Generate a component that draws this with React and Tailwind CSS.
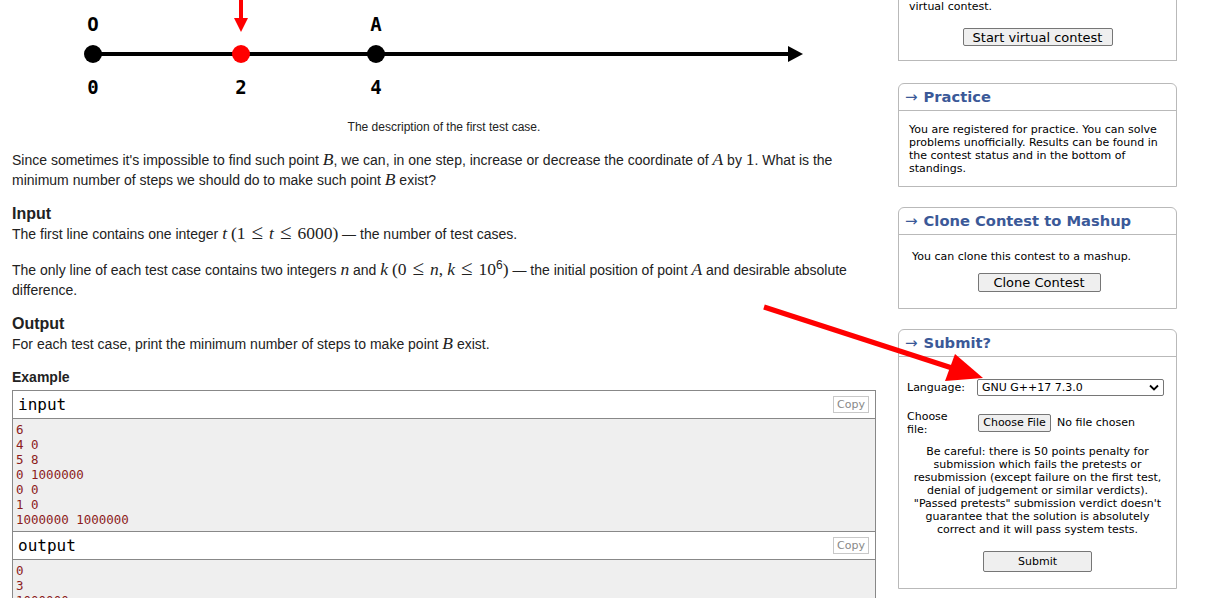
import React from 'react';

const sans = "font-['Liberation_Sans',Arial,sans-serif]";
const verdana = "font-['DejaVu_Sans',Verdana,sans-serif]";
const mono = "font-['DejaVu_Sans_Mono',monospace]";
const mathCls = "font-['Liberation_Serif',serif] text-[17.5px] leading-[0px]";

function M({ children, i = true }) {
  return <span className={`${mathCls} ${i ? 'italic' : ''}`}>{children}</span>;
}

// relation sign with the thick spacing tex puts around it
function Rel({ children }) {
  return <span className="font-['Liberation_Serif',serif] text-[21px] leading-[0px] mx-[6px]">{children}</span>;
}

/**
 * Number line picture of the first test case
 */
function Diagram() {
  return (
    <svg width="864" height="120" viewBox="0 0 864 120" className="block">
      <line x1="81" y1="54" x2="778" y2="54" stroke="#000" strokeWidth="4" />
      <polygon points="776,46 791,54 776,62" fill="#000" />
      <circle cx="81" cy="54" r="9" fill="#000" />
      <circle cx="229" cy="54" r="9" fill="#ff0000" />
      <circle cx="364" cy="54" r="9" fill="#000" />
      <line x1="229" y1="0" x2="229" y2="19" stroke="#ff0000" strokeWidth="4" />
      <polygon points="222,18 236,18 229,32" fill="#ff0000" />
      <g fontFamily="'DejaVu Sans Mono', monospace" fontWeight="bold" fontSize="19" textAnchor="middle">
        <text x="81" y="31">O</text>
        <text x="364" y="31">A</text>
        <text x="81" y="94">0</text>
        <text x="229" y="94">2</text>
        <text x="364" y="94">4</text>
      </g>
    </svg>
  );
}

function SampleBlock({ title, lines, last }) {
  return (
    <div className={last ? '' : 'border-b border-[#888]'}>
      <div className="h-[28px] border-b border-[#888] bg-white flex items-center justify-between pl-[5px] pr-[6px]">
        <span className={`${mono} text-[16px] text-black`}>{title}</span>
        <span className={`${verdana} text-[11px] leading-[15px] text-[#888] border border-[#c8c8c8] px-[3px]`}>Copy</span>
      </div>
      <div className={`${mono} bg-[#efefef] text-[12.5px] leading-[15px] text-[#8c1c1c] pl-[3px] pt-[3px] pb-[4px]`}>
        {lines.map((l, i) => (
          <div key={i} className="whitespace-pre">{l}</div>
        ))}
      </div>
    </div>
  );
}

function RoundBox({ title, children, className = '' }) {
  return (
    <div className={`border border-[#b9b9b9] rounded-t-[6px] ${className}`}>
      <div className="h-[27px] border-b border-[#b9b9b9] flex items-center pl-[6px] text-[#3b5998]">
        <span className={`${verdana} text-[15px] mr-[6px] leading-none`}>→</span>
        <span className={`${verdana} font-bold text-[14.7px] leading-none`}>{title}</span>
      </div>
      {children}
    </div>
  );
}

const btn = `${verdana} bg-[#efefef] border border-[#767676] rounded-[2px] text-black flex items-center justify-center`;

export default function App() {
  return (
    <div className="relative w-[1208px] h-[598px] overflow-hidden bg-white">
      <div className="flex items-start">
        {/* Problem statement */}
        <div className={`${sans} ml-[12px] w-[864px] text-[#222] text-[14px] leading-[20px]`}>
          <Diagram />
          <div className="text-center text-[12px] leading-[14px]">The description of the first test case.</div>

          <p className="mt-[16px]">
            Since sometimes it's impossible to find such point <M>B</M>, we can, in one step, increase or decrease the
            coordinate of <M>A</M> by <M i={false}>1</M>. What is the minimum number of steps we should do to make such
            point <M>B</M> exist?
          </p>

          <div className="mt-[14px] font-bold text-[16px]">Input</div>
          <p>
            The first line contains one integer <M>t</M>{' '}
            <M i={false}>(1</M><Rel>≤</Rel><M>t</M><Rel>≤</Rel><M i={false}>6000)</M> — the number of test cases.
          </p>
          <p className="mt-[16px]">
            The only line of each test case contains two integers <M>n</M> and <M>k</M>{' '}
            <M i={false}>(0</M><Rel>≤</Rel><M>n</M><M i={false}>,</M><span className="ml-[4px]" /><M>k</M>
            <Rel>≤</Rel><M i={false}>10</M>
            <sup className="text-[12px]">6</sup><M i={false}>)</M> — the initial position of point <M>A</M> and
            desirable absolute difference.
          </p>

          <div className="mt-[14px] font-bold text-[16px]">Output</div>
          <p>
            For each test case, print the minimum number of steps to make point <M>B</M> exist.
          </p>

          <div className="mt-[13px] font-bold text-[14px]">Example</div>
          <div className="mt-[3px] border border-[#888]">
            <SampleBlock
              title="input"
              lines={['6', '4 0', '5 8', '0 1000000', '0 0', '1 0', '1000000 1000000']}
            />
            <SampleBlock title="output" lines={['0', '3', '1000000', '0', '1', '0']} last />
          </div>
        </div>

        {/* Sidebar */}
        <div className={`${verdana} ml-[22px] w-[279px] text-[11px] leading-[13px] text-black`}>
          <div className="border-x border-b border-[#b9b9b9] px-[10px] pb-[14px]">
            <div>virtual contest.</div>
            <div className="flex justify-center mt-[15px]">
              <div className={`${btn} w-[150px] h-[18px] text-[13px]`}>Start virtual contest</div>
            </div>
          </div>

          <RoundBox title="Practice" className="mt-[22px]">
            <div className="px-[10px] pt-[12px] pb-[11px]">
              You are registered for practice. You can solve problems unofficially. Results can be found in the contest
              status and in the bottom of standings.
            </div>
          </RoundBox>

          <RoundBox title="Clone Contest to Mashup" className="mt-[20px]">
            <div className="pl-[13px] pr-[10px] pt-[15px] pb-[16px]">
              <div>You can clone this contest to a mashup.</div>
              <div className="flex justify-center mt-[10px]">
                <div className={`${btn} w-[123px] h-[19px] text-[13px]`}>Clone Contest</div>
              </div>
            </div>
          </RoundBox>

          <RoundBox title="Submit?" className="mt-[20px]">
            <div className="px-[8px] pt-[21px] pb-[16px]">
              <div className="flex items-center h-[19px]">
                <div className="w-[70px]">Language:</div>
                <div className="w-[187px] h-[17px] border border-[#767676] rounded-[2px] flex items-center justify-between pl-[4px] pr-[4px]">
                  <span>GNU G++17 7.3.0</span>
                  <svg width="10" height="7" viewBox="0 0 10 7">
                    <path d="M1 1.5 L5 5.5 L9 1.5" fill="none" stroke="#000" strokeWidth="1.8" />
                  </svg>
                </div>
              </div>
              <div className="flex items-center mt-[12px] h-[27px]">
                <div className="w-[71px]">
                  Choose
                  <br />
                  file:
                </div>
                <div className={`${btn} w-[73px] h-[18px]`}>Choose File</div>
                <span className="ml-[6px]">No file chosen</span>
              </div>
              <p className="text-center mt-[9px] px-[2px]">
                Be careful: there is 50 points penalty for submission which fails the pretests or resubmission (except
                failure on the first test, denial of judgement or similar verdicts). "Passed pretests" submission verdict
                doesn't guarantee that the solution is absolutely correct and it will pass system tests.
              </p>
              <div className="flex justify-center mt-[15px]">
                <div className={`${btn} w-[109px] h-[21px]`}>Submit</div>
              </div>
            </div>
          </RoundBox>
        </div>
      </div>

      {/* Red annotation arrow */}
      <svg className="absolute inset-0 pointer-events-none" width="1208" height="598" viewBox="0 0 1208 598">
        <line x1="764" y1="307" x2="952" y2="368" stroke="#ff0000" strokeWidth="5" />
        <polygon points="983,378 945,381 955,354" fill="#ff0000" />
      </svg>
    </div>
  );
}
